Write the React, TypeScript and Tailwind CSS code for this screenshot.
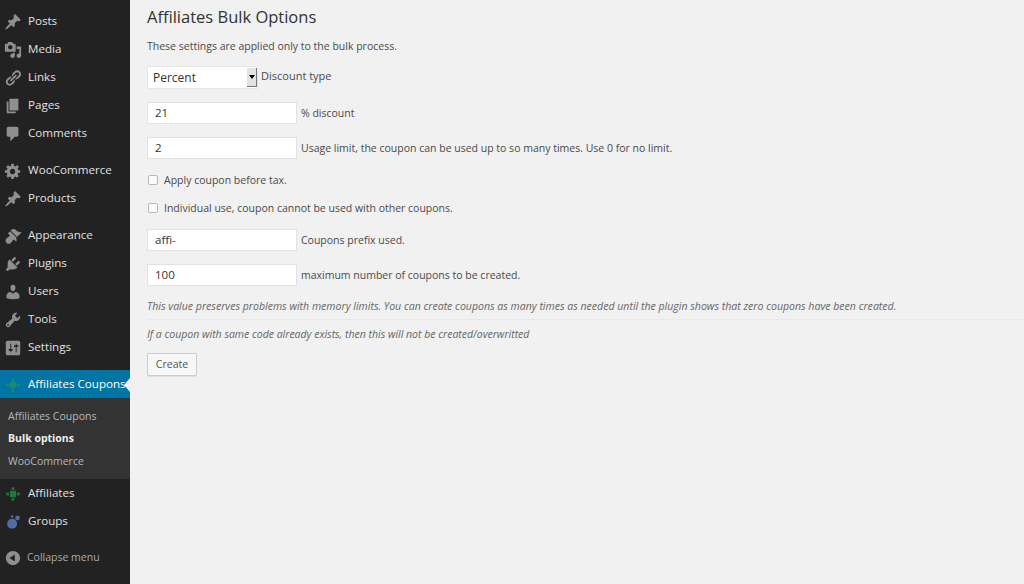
const P: Record<string, string> = {
  post: "M10.44 3.02l1.82-1.82 6.36 6.35-1.83 1.82c-1.05-.68-2.48-.57-3.41.36l-.75.75c-.92.93-1.04 2.35-.35 3.41l-1.83 1.82-2.41-2.41-2.8 2.79c-.42.42-3.38 2.71-3.8 2.29s1.86-3.39 2.28-3.81l2.79-2.79L4.1 9.36l1.83-1.82c1.05.69 2.48.57 3.4-.36l.75-.75c.93-.92 1.05-2.35.36-3.41z",
  media: "M13 11V4c0-.55-.45-1-1-1h-1.67L9 1H5L3.67 3H2c-.55 0-1 .45-1 1v7c0 .55.45 1 1 1h10c.55 0 1-.45 1-1zM7 4.5c1.38 0 2.5 1.12 2.5 2.5S8.38 9.5 7 9.5 4.5 8.38 4.5 7 5.62 4.5 7 4.5zM14 6h5v10.5c0 1.38-1.12 2.5-2.5 2.5S14 17.88 14 16.5s1.12-2.5 2.5-2.5c.17 0 .34.02.5.05V9h-3V6zm-4 8.05V13h2v3.5c0 1.38-1.12 2.5-2.5 2.5S7 17.88 7 16.5 8.12 14 9.5 14c.17 0 .34.02.5.05z",
  links: "M17.74 2.76c1.68 1.69 1.68 4.41 0 6.1l-1.53 1.52c-1.12 1.12-2.7 1.47-4.14 1.09l2.62-2.61.76-.77.76-.76c.84-.84.84-2.2 0-3.04-.84-.85-2.2-.85-3.04 0l-.77.76-3.38 3.38c-.37-1.44-.02-3.02 1.1-4.14l1.52-1.53c1.69-1.68 4.42-1.68 6.1 0zM8.59 13.43l5.34-5.34c.42-.42.42-1.1 0-1.52-.44-.43-1.13-.39-1.53 0l-5.33 5.34c-.42.42-.42 1.1 0 1.52.44.43 1.13.39 1.52 0zm-.76 2.29l4.14-4.15c.38 1.44.03 3.02-1.09 4.14l-1.52 1.53c-1.69 1.68-4.41 1.68-6.1 0-1.68-1.68-1.68-4.42 0-6.1l1.53-1.52c1.12-1.12 2.7-1.47 4.14-1.1l-4.14 4.15c-.85.84-.85 2.2 0 3.05.84.84 2.2.84 3.04 0z",
  page: "M6 15V2h10v13H6zm-1 1h8v2H3V5h2v11z",
  comments: "M5 2h9c1.1 0 2 .9 2 2v7c0 1.1-.9 2-2 2h-2l-5 5v-5H5c-1.1 0-2-.9-2-2V4c0-1.1.9-2 2-2z",
  gear: "M18 12h-2.18c-.17.7-.44 1.35-.81 1.93l1.54 1.54-2.1 2.1-1.54-1.54c-.58.36-1.23.63-1.91.79V19H8v-2.18c-.68-.16-1.33-.43-1.91-.79l-1.54 1.54-2.12-2.12 1.54-1.54c-.36-.58-.63-1.23-.79-1.91H1V9.03h2.17c.16-.7.44-1.35.8-1.94L2.43 5.55l2.1-2.1 1.54 1.54c.58-.37 1.24-.64 1.93-.81V2h3v2.18c.68.16 1.33.43 1.91.79l1.54-1.54 2.12 2.12-1.54 1.54c.36.59.64 1.24.8 1.94H18V12zm-8.5 1.5c1.66 0 3-1.34 3-3s-1.34-3-3-3-3 1.34-3 3 1.34 3 3 3z",
  appearance: "M14.48 11.06L7.41 3.99l1.5-1.5c.5-.56 2.3-.47 3.51.32 1.21.8 1.43 1.28 2.91 2.1 1.18.64 2.45 1.26 4.45.85zm-.71.71L6.7 4.7 4.93 6.47c-.39.39-.39 1.02 0 1.41l1.06 1.06c.39.39.39 1.03 0 1.42-.6.6-1.43 1.11-2.21 1.69-.35.26-.7.53-1.01.84-1.34 1.34-1.34 3.5 0 4.84s3.5 1.34 4.84 0c.31-.31.58-.66.84-1.01.58-.78 1.09-1.61 1.69-2.21.39-.39 1.03-.39 1.42 0l1.06 1.06c.39.39 1.02.39 1.41 0z",
  plugins: "M13.11 4.36L9.87 7.6 8 5.73l3.24-3.24c.35-.34 1.05-.2 1.56.32.52.51.66 1.21.31 1.55zm-8 1.77l.91-1.12 9.01 9.01-1.19.84c-.71.71-2.63 1.16-3.82 1.16H6.14L4.9 17.26c-.59.59-1.54.59-2.12 0-.59-.58-.59-1.53 0-2.12l1.24-1.24v-3.88c0-1.13.4-3.19 1.09-3.89zm7.26 3.97l3.24-3.24c.34-.35 1.04-.21 1.55.31.52.51.66 1.21.31 1.55l-3.24 3.25z",
  users: "M10 9.25c-2.27 0-2.73-3.44-2.73-3.44C7 4.02 7.82 2 9.97 2c2.16 0 2.98 2.02 2.71 3.81 0 0-.41 3.44-2.68 3.44zm0 2.57L12.72 10c2.39 0 4.52 2.33 4.52 4.53v2.49s-3.65 1.13-7.24 1.13c-3.65 0-7.24-1.13-7.24-1.13v-2.49c0-2.25 1.94-4.48 4.47-4.48z",
  tools: "M16.68 9.77c-1.34 1.34-3.3 1.67-4.95.99l-5.41 6.52c-.99.99-2.59.99-3.58 0s-.99-2.59 0-3.57l6.52-5.42c-.68-1.65-.35-3.61.99-4.95 1.28-1.28 3.12-1.62 4.72-1.06l-2.89 2.89 2.82 2.82 2.86-2.87c.53 1.58.18 3.39-1.08 4.65zM3.81 16.21c.4.39 1.04.39 1.43 0 .4-.4.4-1.04 0-1.43-.39-.4-1.03-.4-1.43 0-.39.39-.39 1.03 0 1.43z",
  settings: "M18 16V4c0-1.1-.9-2-2-2H4c-1.1 0-2 .9-2 2v12c0 1.1.9 2 2 2h12c1.1 0 2-.9 2-2zM8 11h1c.55 0 1 .45 1 1s-.45 1-1 1H8v1.5c0 .28-.22.5-.5.5s-.5-.22-.5-.5V13H6c-.55 0-1-.45-1-1s.45-1 1-1h1V5.5c0-.28.22-.5.5-.5s.5.22.5.5V11zm5-2h-1c-.55 0-1-.45-1-1s.45-1 1-1h1V5.5c0-.28.22-.5.5-.5s.5.22.5.5V7h1c.55 0 1 .45 1 1s-.45 1-1 1h-1v5.5c0 .28-.22.5-.5.5s-.5-.22-.5-.5V9z",
  collapse: "M10 2.16c4.33 0 7.84 3.51 7.84 7.84s-3.51 7.84-7.84 7.84S2.16 14.33 2.16 10 5.71 2.16 10 2.16zm2 11.72V6.12L6.18 9.97z",
};

function Dash({ d }: { d: string }) {
  return (
    <svg viewBox="0 0 20 20" className="w-[18px] h-[18px] shrink-0 text-[#8f8f8f]" fill="currentColor">
      <path d={d} />
    </svg>
  );
}

function Dots({ color }: { color: string }) {
  return (
    <svg viewBox="0 0 20 20" className="w-[18px] h-[18px] shrink-0" fill={color}>
      <rect x="6.5" y="6.5" width="7" height="7" rx="1" />
      <rect x="8.5" y="2.5" width="3" height="3" />
      <rect x="8.5" y="14.5" width="3" height="3" />
      <rect x="2.5" y="8.5" width="3" height="3" />
      <rect x="14.5" y="8.5" width="3" height="3" />
    </svg>
  );
}

function Groups() {
  return (
    <svg viewBox="0 0 20 20" className="w-[18px] h-[18px] shrink-0" fill="#4e6ca6">
      <circle cx="9" cy="12" r="5.5" />
      <circle cx="15" cy="5.5" r="2.6" />
      <circle cx="9" cy="4" r="1.4" />
    </svg>
  );
}

function Row({ icon, label }: { icon: React.ReactNode; label: string }) {
  return (
    <div className="h-7 flex items-center pl-[4px] pt-[1px]">
      <div className="w-[24px] flex">{icon}</div>
      <span className="mb-[2px] text-[11.6px] text-[#e0e0e0]">{label}</span>
    </div>
  );
}

function Field({ value, label }: { value: string; label: string }) {
  return (
    <div className="flex items-center gap-[4px] h-[22px]">
      <div className="w-[150px] h-[22px] bg-white border border-[#e2e2e2] pl-[7px] text-[11.5px] leading-[20px] text-[#333]">{value}</div>
      <span className="pt-[2px]">{label}</span>
    </div>
  );
}

function Check({ label }: { label: string }) {
  return (
    <label className="flex items-center gap-[6px] h-[16px]">
      <span className="w-[10px] h-[10px] ml-[1px] bg-[#fbfbfb] border border-[#b4b9be] rounded-[2px]" />
      <span className="pt-[2px]">{label}</span>
    </label>
  );
}

export default function App() {
  return (
    <div className="w-[1024px] h-[584px] flex overflow-hidden bg-[#f1f1f1] font-['Open_Sans',sans-serif]">
      <aside className="w-[130px] shrink-0 bg-[#222] pt-[7px] overflow-hidden">
        <Row icon={<Dash d={P.post} />} label="Posts" />
        <Row icon={<Dash d={P.media} />} label="Media" />
        <Row icon={<Dash d={P.links} />} label="Links" />
        <Row icon={<Dash d={P.page} />} label="Pages" />
        <Row icon={<Dash d={P.comments} />} label="Comments" />
        <div className="h-[9px]" />
        <Row icon={<Dash d={P.gear} />} label="WooCommerce" />
        <Row icon={<Dash d={P.post} />} label="Products" />
        <div className="h-[9px]" />
        <Row icon={<Dash d={P.appearance} />} label="Appearance" />
        <Row icon={<Dash d={P.plugins} />} label="Plugins" />
        <Row icon={<Dash d={P.users} />} label="Users" />
        <Row icon={<Dash d={P.tools} />} label="Tools" />
        <Row icon={<Dash d={P.settings} />} label="Settings" />
        <div className="h-[9px]" />
        <div className="relative h-[28px] bg-[#0074a2] flex items-center pl-[4px] pt-[1px]">
          <div className="w-[24px] flex"><Dots color="#1b8a7a" /></div>
          <span className="mb-[2px] text-[11.6px] text-white whitespace-nowrap">Affiliates Coupons</span>
          <span className="absolute right-0 top-[8px] w-0 h-0 border-y-[7px] border-y-transparent border-r-[6px] border-r-[#f1f1f1]" />
        </div>
        <div className="h-[81px] bg-[#333] pt-[7px] pl-[8px] text-[10.5px]">
          <div className="h-[22.5px] leading-[22px] text-[#b4b9be]">Affiliates Coupons</div>
          <div className="h-[22.5px] leading-[21px] text-[#eee] font-bold">Bulk options</div>
          <div className="h-[22.5px] leading-[22px] text-[#b4b9be]">WooCommerce</div>
        </div>
        <Row icon={<Dots color="#1c7a3c" />} label="Affiliates" />
        <Row icon={<Groups />} label="Groups" />
        <div className="h-[9px]" />
        <div className="h-[26px] flex items-center pl-[4px] pt-[1px] text-[10.5px] text-[#aaa]">
          <div className="w-[23px] flex"><Dash d={P.collapse} /></div>
          <span className="pt-[1px]">Collapse menu</span>
        </div>
      </aside>
      <main className="flex-1 pl-[17px] text-[10.5px] text-[#4a4a4a]">
        <h1 className="text-[16.5px] leading-[22px] mt-[6px] text-[#333]">Affiliates Bulk Options</h1>
        <p className="mt-[10px] leading-[16px]">These settings are applied only to the bulk process.</p>
        <div className="mt-[12px] flex items-start gap-[3px] h-[22px]">
          <div className="relative w-[111px] h-[23px] bg-white border border-[#e6e6e6] pl-[5px] text-[12px] leading-[21px] text-[#333]">
            Percent
            <span className="absolute right-[0px] top-[1px] w-[10px] h-[19px] bg-[#e3e3e3] border-r border-b border-[#777] flex items-center justify-center">
              <span className="w-0 h-0 border-x-[3px] border-x-transparent border-t-[4px] border-t-black" />
            </span>
          </div>
          <span className="leading-[20px] text-[11px]">Discount type</span>
        </div>
        <div className="mt-[14px]"><Field value="21" label="% discount" /></div>
        <div className="mt-[13px]"><Field value="2" label="Usage limit, the coupon can be used up to so many times. Use 0 for no limit." /></div>
        <div className="mt-[13px]"><Check label="Apply coupon before tax." /></div>
        <div className="mt-[12px]"><Check label="Individual use, coupon cannot be used with other coupons." /></div>
        <div className="mt-[13px]"><Field value="affi-" label="Coupons prefix used." /></div>
        <div className="mt-[13px]"><Field value="100" label="maximum number of coupons to be created." /></div>
        <p className="mt-[12px] leading-[16px] italic text-[#666] text-[10.55px]">This value preserves problems with memory limits. You can create coupons as many times as needed until the plugin shows that zero coupons have been created.</p>
        <hr className="mt-[5px] border-t border-[#e8e8e8]" />
        <p className="mt-[6px] leading-[16px] italic text-[#666]">If a coupon with same code already exists, then this will not be created/overwritted</p>
        <button className="block mt-[11px] w-[50px] h-[23px] bg-[#f7f7f7] border border-[#ccc] rounded-[2px] shadow-[0_1px_0_#ddd] text-[10.5px] text-[#555]">Create</button>
      </main>
    </div>
  );
}
